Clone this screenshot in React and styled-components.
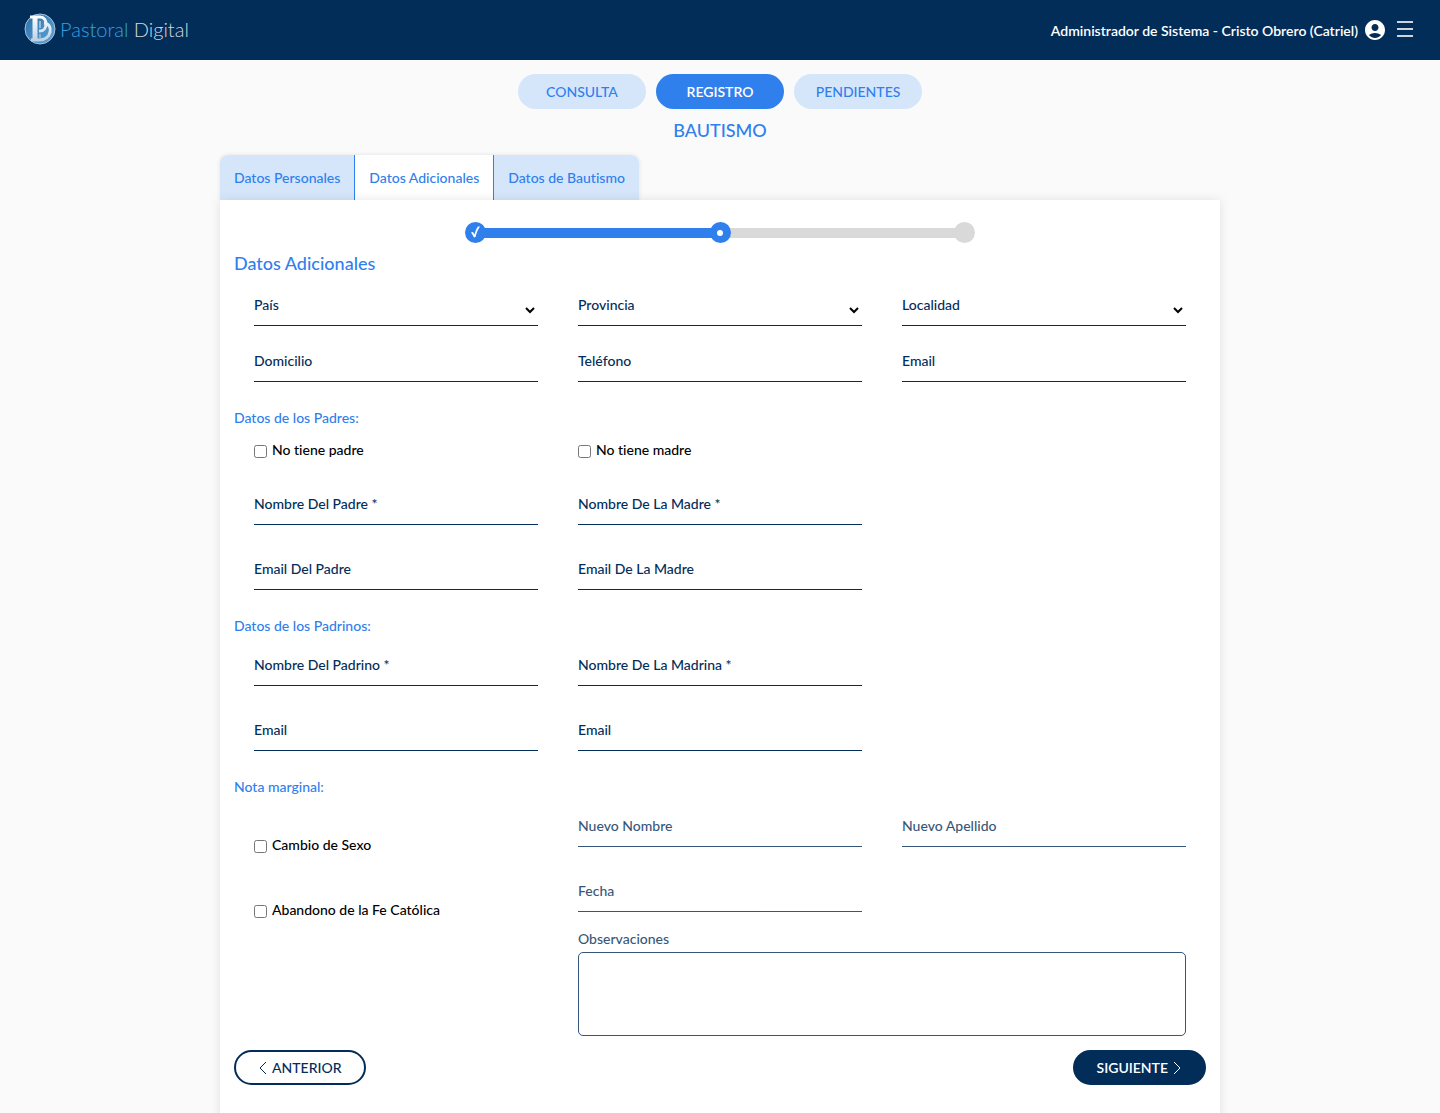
import React, { useState } from "react";
import styled, { createGlobalStyle } from "styled-components";
import { MdAccountCircle } from "react-icons/md";

const GlobalStyle = createGlobalStyle`
    * {
        box-sizing: border-box;
    }

    body {
        margin: 0;
        background-color: #fafafa;
        color: #000;
        font-family: Lato, "Liberation Sans", sans-serif;
        font-size: 14px;
        font-weight: 500;
        font-variant-ligatures: none;
        line-height: 20px;
    }

    button, input, select, textarea {
        font: inherit;
        font-variant-ligatures: none;
    }
`;

const Logo = () => (
    <LogoStyled href="#">
        <svg width="32" height="32" viewBox="0 0 32 32" aria-hidden="true">
            <defs>
                <linearGradient id="disc" x1="0" y1="0" x2="1" y2="1">
                    <stop offset="0" stopColor="#2a6fa9" />
                    <stop offset="1" stopColor="#5fa6d6" />
                </linearGradient>
                <linearGradient
                    id="letter"
                    gradientUnits="userSpaceOnUse"
                    x1="0"
                    y1="3"
                    x2="0"
                    y2="29"
                >
                    <stop offset="0" stopColor="#ffffff" />
                    <stop offset="1" stopColor="#b9cfe4" />
                </linearGradient>
            </defs>
            <circle cx="16" cy="16" r="15" fill="url(#disc)" stroke="#a9c4dc" />
            <g fill="none" stroke="url(#letter)">
                <path d="M11 4V27" strokeWidth="5" />
                <path d="M6 4H16C24 4 24 18 16 18H15" strokeWidth="3" />
                <path d="M20 10C30 11 28 27 15 27H7" strokeWidth="3" />
                <path d="M16 8V15M16 21V25" strokeWidth="1" />
            </g>
        </svg>
        <span>
            Pastoral <em>Digital</em>
        </span>
    </LogoStyled>
);

const Chevron = ({ right }) => (
    <svg width="10" height="14" viewBox="0 0 10 14" aria-hidden="true">
        <path
            d={right ? "M2 1L8 7L2 13" : "M8 1L2 7L8 13"}
            fill="none"
            stroke="currentColor"
            strokeWidth="1"
        />
    </svg>
);

const TextField = ({ id, label, muted, type = "text" }) => (
    <Field $muted={muted}>
        <label htmlFor={id}>{label}</label>
        <input id={id} type={type} disabled={muted} />
    </Field>
);

const SelectField = ({ id, label }) => (
    <Field>
        <label htmlFor={id}>{label}</label>
        <select id={id} defaultValue="">
            <option value=""></option>
        </select>
    </Field>
);

const CheckField = ({ id, label }) => (
    <Check>
        <input id={id} type="checkbox" />
        <label htmlFor={id}>{label}</label>
    </Check>
);

const views = ["Consulta", "Registro", "Pendientes"];
const tabs = ["Datos Personales", "Datos Adicionales", "Datos de Bautismo"];

const App = () => {
    const [view, setView] = useState("Registro");
    const [tab, setTab] = useState("Datos Adicionales");

    return (
        <>
            <GlobalStyle />
            <Header>
                <Logo />
                <UserArea>
                    <span>Administrador de Sistema - Cristo Obrero (Catriel)</span>
                    <MdAccountCircle size={24} />
                    <MenuButton aria-label="Menú">
                        <svg width="16" height="16" viewBox="0 0 16 16">
                            <path
                                d="M0 1H16M0 8H16M0 15H16"
                                stroke="#fff"
                                strokeOpacity="0.8"
                                strokeWidth="2"
                            />
                        </svg>
                    </MenuButton>
                </UserArea>
            </Header>

            <Main>
                <Views>
                    {views.map((name) => (
                        <ViewButton
                            key={name}
                            $active={name === view}
                            onClick={() => setView(name)}
                        >
                            {name}
                        </ViewButton>
                    ))}
                </Views>
                <PageTitle>Bautismo</PageTitle>

                <Tabs>
                    {tabs.map((name) => (
                        <Tab
                            key={name}
                            $active={name === tab}
                            onClick={() => setTab(name)}
                        >
                            {name}
                        </Tab>
                    ))}
                </Tabs>

                <Card onSubmit={(e) => e.preventDefault()}>
                    <Stepper>
                        <Step $done>
                            <svg width="21" height="21" viewBox="0 0 21 21">
                                <path
                                    d="M6 10.500L8 10L9.500 12.500C10.500 9 11.500 6 13 4.500L15 4.500C13 7 11.500 11 10.500 15L9 15.500C8 13.500 7 12 6 10.500Z"
                                    fill="#fff"
                                />
                            </svg>
                        </Step>
                        <Bar $done />
                        <Step $done>
                            <svg width="21" height="21" viewBox="0 0 21 21">
                                <circle cx="10" cy="11" r="3" fill="#fff" />
                            </svg>
                        </Step>
                        <Bar />
                        <Step />
                    </Stepper>

                    <FormTitle>Datos Adicionales</FormTitle>
                    <Fields $tight>
                        <SelectField id="pais" label="País" />
                        <SelectField id="provincia" label="Provincia" />
                        <SelectField id="localidad" label="Localidad" />
                        <TextField id="domicilio" label="Domicilio" />
                        <TextField id="telefono" label="Teléfono" type="tel" />
                        <TextField id="email" label="Email" type="email" />
                    </Fields>

                    <SectionTitle>Datos de los Padres:</SectionTitle>
                    <Fields>
                        <PersonColumn>
                            <CheckField id="sinPadre" label="No tiene padre" />
                            <TextField id="padre" label="Nombre Del Padre *" />
                            <TextField id="emailPadre" label="Email Del Padre" />
                        </PersonColumn>
                        <PersonColumn>
                            <CheckField id="sinMadre" label="No tiene madre" />
                            <TextField id="madre" label="Nombre De La Madre *" />
                            <TextField id="emailMadre" label="Email De La Madre" />
                        </PersonColumn>
                    </Fields>

                    <SectionTitle>Datos de los Padrinos:</SectionTitle>
                    <Fields>
                        <PersonColumn>
                            <TextField id="padrino" label="Nombre Del Padrino *" />
                            <TextField id="emailPadrino" label="Email" />
                        </PersonColumn>
                        <PersonColumn>
                            <TextField id="madrina" label="Nombre De La Madrina *" />
                            <TextField id="emailMadrina" label="Email" />
                        </PersonColumn>
                    </Fields>

                    <SectionTitle>Nota marginal:</SectionTitle>
                    <Fields>
                        <NoteChecks>
                            <CheckField id="cambioSexo" label="Cambio de Sexo" />
                            <CheckField
                                id="abandono"
                                label="Abandono de la Fe Católica"
                            />
                        </NoteChecks>
                        <NoteFields>
                            <TextField id="nuevoNombre" label="Nuevo Nombre" muted />
                            <TextField
                                id="nuevoApellido"
                                label="Nuevo Apellido"
                                muted
                            />
                            <TextField id="fecha" label="Fecha" muted />
                            <Notes>
                                <label htmlFor="observaciones">Observaciones</label>
                                <textarea id="observaciones" disabled />
                            </Notes>
                        </NoteFields>
                    </Fields>

                    <Actions>
                        <ActionButton type="button">
                            <Chevron />
                            Anterior
                        </ActionButton>
                        <ActionButton type="submit" $filled>
                            Siguiente
                            <Chevron right />
                        </ActionButton>
                    </Actions>
                </Card>
            </Main>
        </>
    );
};

export default App;

const Header = styled.header`
    display: flex;
    justify-content: space-between;
    align-items: center;
    height: 60px;
    padding: 0 27px 0 24px;
    background-color: #032d59;
    color: #fff;
`;

const LogoStyled = styled.a`
    display: flex;
    align-items: center;
    gap: 4px;
    padding-bottom: 2px;
    color: #36a0e0;
    font-size: 20px;
    font-weight: 300;
    text-decoration: none;

    em {
        font-style: normal;
        color: #d5d8dc;
    }
`;

const UserArea = styled.div`
    display: flex;
    align-items: center;
    gap: 5px;
    font-weight: 600;

    span {
        padding-top: 2px;
    }
`;

const MenuButton = styled.button`
    display: flex;
    margin-left: 5px;
    padding: 0 0 2px;
    border: none;
    background: none;
    cursor: pointer;
`;

const Main = styled.main`
    width: min(100%, 1000px);
    margin-inline: auto;
    padding-top: 14px;
`;

const Views = styled.nav`
    display: flex;
    justify-content: center;
    gap: 10px;
`;

const ViewButton = styled.button`
    width: 128px;
    height: 35px;
    border: none;
    border-radius: 18px;
    background-color: ${(props) => (props.$active ? "#2f80ed" : "#d5e6fb")};
    color: ${(props) => (props.$active ? "#fff" : "#2f80ed")};
    font-weight: ${(props) => (props.$active ? 600 : 500)};
    text-transform: uppercase;
    cursor: pointer;
`;

const PageTitle = styled.h1`
    margin: 9px 0 13px;
    color: #2f80ed;
    font-size: 18px;
    font-weight: 500;
    line-height: 24px;
    text-align: center;
    text-transform: uppercase;
`;

const Tabs = styled.div`
    display: flex;
    width: fit-content;
    border-radius: 8px 8px 0 0;
    box-shadow: 0 0 4px rgba(0, 0, 0, 0.1);
    overflow: hidden;
`;

const Tab = styled.button`
    height: 45px;
    padding: 0 14px;
    border: none;
    background-color: ${(props) => (props.$active ? "#fff" : "#d5e6fb")};
    color: #2f80ed;
    cursor: pointer;

    & + & {
        border-left: 1px solid #2f80ed;
    }
`;

const Card = styled.form`
    position: relative;
    padding: 22px 14px 40px;
    background-color: #fff;
    box-shadow: 0 0 10px rgba(0, 0, 0, 0.1);
`;

const Stepper = styled.div`
    display: flex;
    align-items: center;
    width: min(100%, 510px);
    margin: 0 auto 8px;
`;

const Step = styled.div`
    z-index: 1;
    width: 21px;
    height: 21px;
    border-radius: 50%;
    background-color: ${(props) => (props.$done ? "#2f80ed" : "#d9d9d9")};

    svg {
        display: block;
    }
`;

const Bar = styled.div`
    flex: 1;
    height: 10px;
    margin-inline: -2px;
    background-color: ${(props) => (props.$done ? "#2f80ed" : "#d9d9d9")};
`;

const FormTitle = styled.h2`
    margin: 0 0 11px;
    color: #2f80ed;
    font-size: 18px;
    font-weight: 500;
    line-height: 24px;
`;

const SectionTitle = styled.h3`
    margin: 26px 0 10px;
    color: #2f80ed;
    font-size: 14px;
    font-weight: 500;
`;

const Fields = styled.div`
    display: grid;
    grid-template-columns: repeat(3, 1fr);
    gap: ${(props) => (props.$tight ? "16px" : "25px")} 40px;
    padding: 0 20px;
`;

const PersonColumn = styled.div`
    display: flex;
    flex-direction: column;
    gap: 25px;
`;

// the label rests over the empty control
const Field = styled.div`
    position: relative;
    display: flex;
    align-items: flex-end;
    height: 40px;
    color: #032d59;
    opacity: ${(props) => (props.$muted ? 0.8 : 1)};

    label {
        position: absolute;
        top: 9px;
        left: 0;
        pointer-events: none;
    }

    input,
    select {
        width: 100%;
        height: 31px;
        padding: 0;
        border: none;
        border-bottom: 1px solid #032d59;
        border-radius: 0;
        background: transparent;
        outline: none;
    }
`;

const Check = styled.div`
    display: flex;
    align-items: flex-start;
    gap: 5px;
    height: 22px;
    padding-top: 2px;

    input {
        width: 13px;
        height: 13px;
        margin: 5px 0 0;
    }
`;

const NoteChecks = styled.div`
    display: flex;
    flex-direction: column;
    gap: 43px;
    padding-top: 26px;
`;

const NoteFields = styled.div`
    grid-column: span 2;
    display: grid;
    grid-template-columns: repeat(2, 1fr);
    gap: 25px 40px;
`;

const Notes = styled.div`
    grid-column: span 2;
    display: flex;
    flex-direction: column;
    gap: 3px;
    margin-top: -8px;
    color: #032d59;
    opacity: 0.8;

    textarea {
        height: 84px;
        border: 1px solid #032d59;
        border-radius: 5px;
        background: transparent;
        resize: none;
    }
`;

const Actions = styled.div`
    display: flex;
    justify-content: space-between;
    margin-top: 14px;
`;

const ActionButton = styled.button`
    display: flex;
    align-items: center;
    gap: 4px;
    height: 35px;
    padding: 0 22px;
    border: 2px solid #032d59;
    border-radius: 18px;
    background-color: ${(props) => (props.$filled ? "#032d59" : "#fff")};
    color: ${(props) => (props.$filled ? "#fff" : "#032d59")};
    font-weight: ${(props) => (props.$filled ? 600 : 500)};
    text-transform: uppercase;
    cursor: pointer;
`;
